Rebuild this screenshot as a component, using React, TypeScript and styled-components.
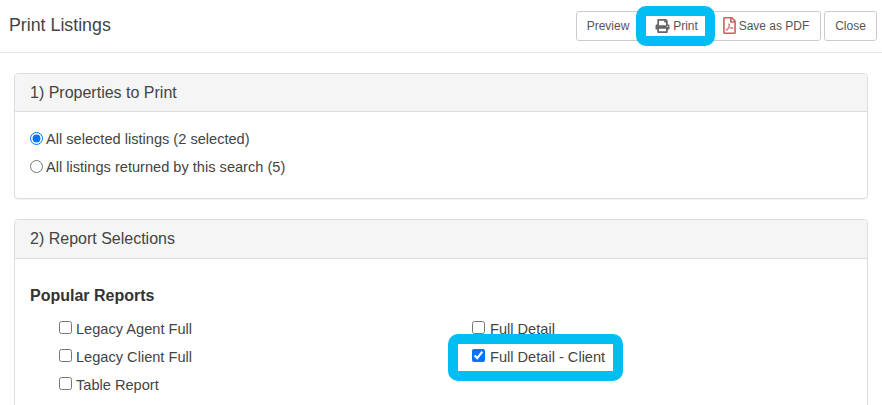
import React from 'react';
import styled, { createGlobalStyle, css } from 'styled-components';
import { FaPrint, FaRegFilePdf } from 'react-icons/fa';

const GlobalStyle = createGlobalStyle`
  html, body {
    margin: 0;
    height: 405px;
    overflow: hidden;
    background: #fff;
  }

  body {
    font-family: "Liberation Sans", Arial, sans-serif;
    font-size: 14.6px;
    color: #444;
  }
`;

const highlight = css`
  border: 10px solid #00bdf2;
  border-radius: 10px;
  background: #fff;
  box-sizing: border-box;
  position: relative;
`;

const Header = styled.header`
  display: flex;
  align-items: center;
  justify-content: space-between;
  height: 52px;
  padding: 0 5px 0 9px;
  border-bottom: 1px solid #e5e5e5;
`;

const Title = styled.h1`
  margin: 0 0 2px;
  font-size: 17.8px;
  font-weight: 400;
  color: #444;
`;

const Toolbar = styled.div`
  display: flex;
  align-items: center;
`;

const Button = styled.button`
  display: flex;
  align-items: center;
  justify-content: center;
  height: 30px;
  padding: 0 10px;
  border: 1px solid #ccc;
  border-radius: 3px;
  background: #fff;
  color: #555;
  font: 12px "Liberation Sans", Arial, sans-serif;
  white-space: nowrap;
`;

const PreviewButton = styled(Button)`
  width: 66px;
  padding-right: 12px;
`;

const PrintButton = styled(Button)`
  ${highlight}
  z-index: 1;
  width: 79px;
  height: 40px;
  margin: 0 -4px 0 -6px;
  padding: 0 0 0 2px;
  gap: 3px;
`;

const PdfButton = styled(Button)`
  width: 110px;
  gap: 3px;
  margin-right: 3px;
`;

const CloseButton = styled(Button)`
  width: 53px;
`;

const PrintIcon = styled(FaPrint)`
  width: 15px;
  height: 14px;
  color: #666;
`;

const PdfIcon = styled(FaRegFilePdf)`
  width: 13px;
  height: 17px;
  margin-top: -2px;
  color: #c9635f;
`;

const Content = styled.main`
  display: flex;
  flex-direction: column;
  gap: 20px;
  padding: 20px 14px 0;
`;

const Panel = styled.section`
  border: 1px solid #ddd;
  border-radius: 4px;
  box-shadow: 0 1px 1px rgba(0, 0, 0, 0.05);
`;

const PanelHeading = styled.h2<{ $tall?: boolean }>`
  margin: 0;
  padding: 10px 15px ${({ $tall }) => ($tall ? '10px' : '9px')};
  border-bottom: 1px solid #ddd;
  border-radius: 3px 3px 0 0;
  background: #f5f5f5;
  font-size: 16px;
  line-height: 18px;
  font-weight: 400;
  color: #444;
`;

const PanelBody = styled.div`
  padding: 13px 15px 17px;
`;

const RadioRow = styled.label`
  display: flex;
  align-items: center;
  height: 28px;
`;

const Radio = styled.input.attrs({ type: 'radio', name: 'scope' })`
  width: 13px;
  height: 13px;
  margin: 0 3px 2px 0;
`;

const SectionTitle = styled.h3`
  margin: 15px 0 9px;
  font-size: 16px;
  line-height: 18px;
  font-weight: 700;
  color: #333;
`;

const ReportGrid = styled.div`
  display: grid;
  grid-template-columns: 413px 1fr;
  grid-auto-rows: 28px;
  padding-left: 29px;
`;

const CheckRow = styled.label`
  display: flex;
  align-items: center;
  box-sizing: border-box;
  height: 28px;
  padding-top: 2px;
`;

const HighlightedCheckRow = styled(CheckRow)`
  ${highlight}
  width: 175px;
  height: 47px;
  margin: -8px 0 0 -24px;
  padding: 0 0 1px 14px;
`;

const Checkbox = styled.input.attrs({ type: 'checkbox' })<{ $gap?: number }>`
  width: 13px;
  height: 13px;
  margin: 0 ${({ $gap }) => $gap ?? 4}px 4px 0;
`;

const ReportOption: React.FC<{ label: string; gap?: number }> = ({ label, gap }) => (
  <CheckRow>
    <Checkbox $gap={gap} />
    {label}
  </CheckRow>
);

const App: React.FC = () => (
  <>
    <GlobalStyle />
    <Header>
      <Title>Print Listings</Title>
      <Toolbar>
        <PreviewButton>Preview</PreviewButton>
        <PrintButton>
          <PrintIcon />
          Print
        </PrintButton>
        <PdfButton>
          <PdfIcon />
          Save as PDF
        </PdfButton>
        <CloseButton>Close</CloseButton>
      </Toolbar>
    </Header>
    <Content>
      <Panel>
        <PanelHeading>1) Properties to Print</PanelHeading>
        <PanelBody>
          <RadioRow>
            <Radio defaultChecked />
            All selected listings (2 selected)
          </RadioRow>
          <RadioRow>
            <Radio />
            All listings returned by this search (5)
          </RadioRow>
        </PanelBody>
      </Panel>
      <Panel>
        <PanelHeading $tall>2) Report Selections</PanelHeading>
        <PanelBody>
          <SectionTitle>Popular Reports</SectionTitle>
          <ReportGrid>
            <ReportOption label="Legacy Agent Full" />
            <ReportOption label="Full Detail" gap={5} />
            <ReportOption label="Legacy Client Full" />
            <HighlightedCheckRow>
              <Checkbox defaultChecked $gap={5} />
              Full Detail - Client
            </HighlightedCheckRow>
            <ReportOption label="Table Report" />
          </ReportGrid>
        </PanelBody>
      </Panel>
    </Content>
  </>
);

export default App;
